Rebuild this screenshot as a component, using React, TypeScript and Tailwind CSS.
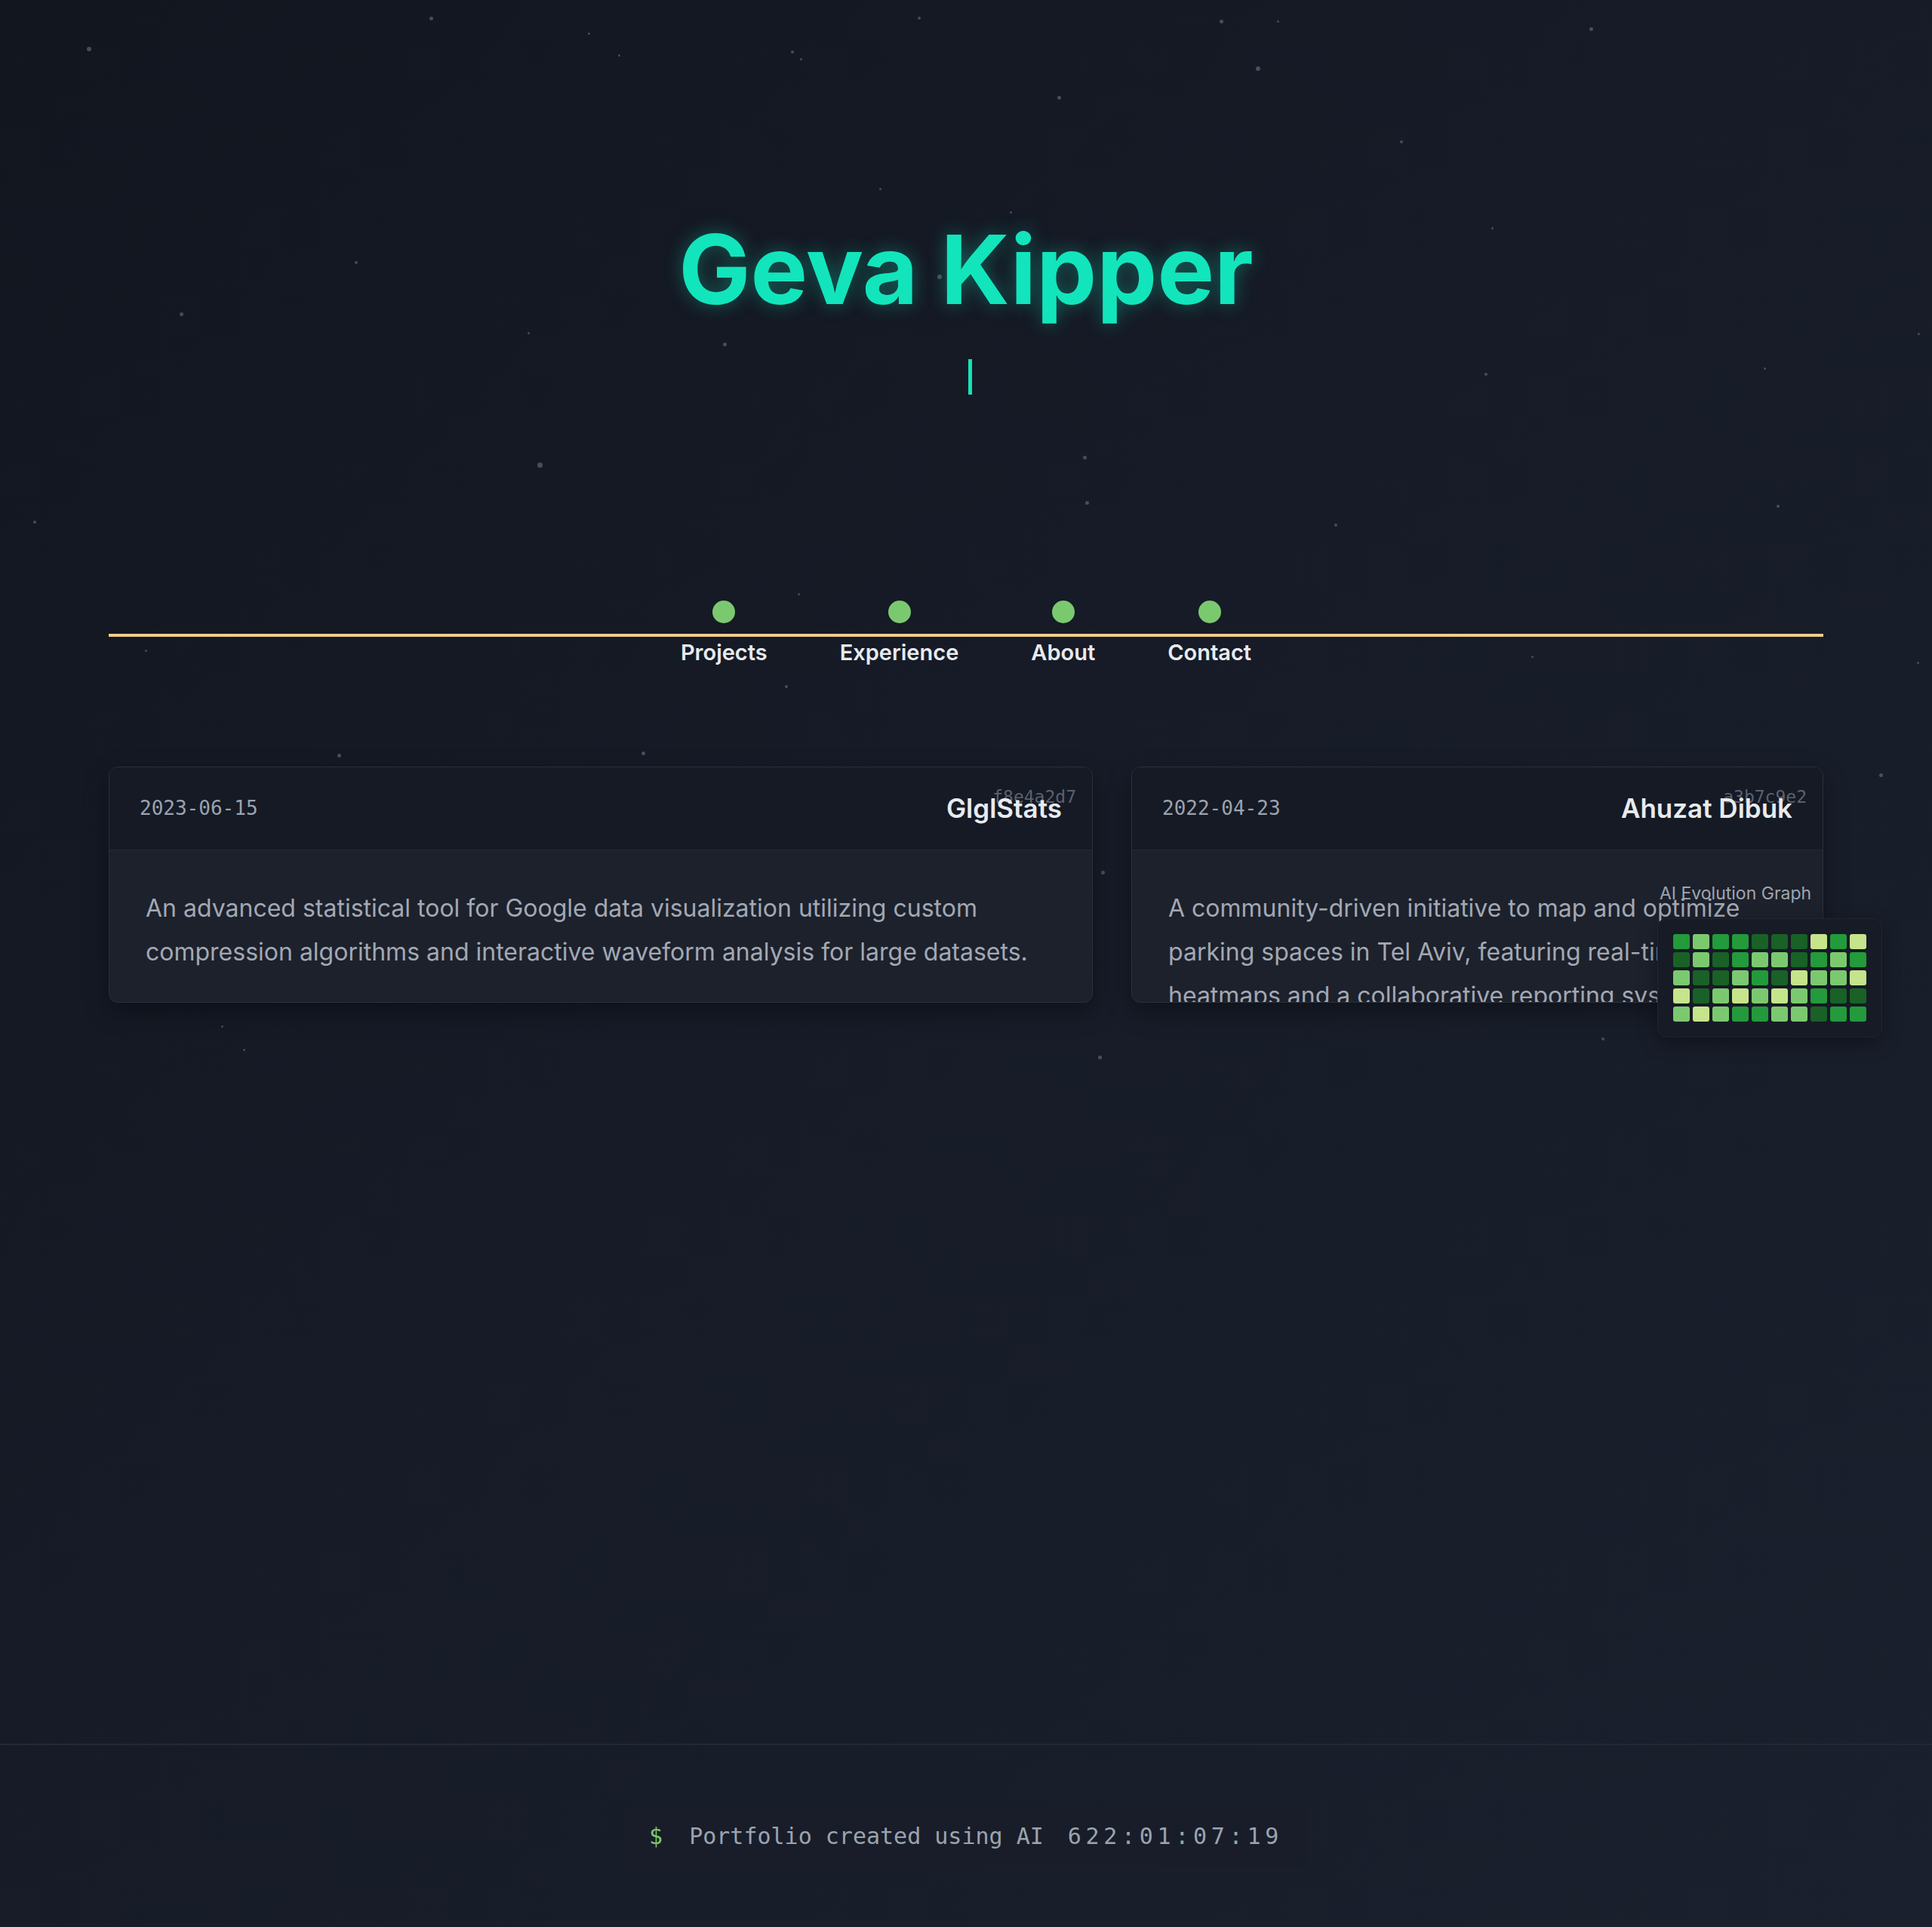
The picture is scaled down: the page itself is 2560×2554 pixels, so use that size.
import React from "react";

const STARS: [number, number, number][] = [
  [118, 65, 6], [571, 24, 5], [1050, 69, 4], [1061, 78, 3], [1218, 24, 4], [1618, 28, 5],
  [1693, 28, 3], [1667, 91, 6], [2108, 38, 5], [1403, 129, 5], [1857, 188, 4], [1166, 250, 3],
  [1977, 302, 3], [472, 348, 4], [240, 416, 5], [700, 441, 3], [960, 456, 5], [2542, 442, 3],
  [2338, 488, 3], [1969, 496, 4], [715, 616, 7], [1437, 606, 5], [1440, 666, 5], [2356, 671, 4],
  [1770, 696, 4], [46, 692, 4], [1058, 787, 3], [193, 862, 3], [2030, 870, 3], [2541, 878, 3],
  [1042, 910, 4], [449, 1001, 5], [852, 998, 5], [2492, 1027, 5], [1461, 1156, 5], [294, 1360, 3],
  [323, 1391, 3], [1457, 1401, 5], [2124, 1377, 4], [780, 44, 3], [820, 73, 3], [1245, 367, 6],
  [1339, 281, 3],
];

const D = "bg-[#196127]";
const M = "bg-[#239a3b]";
const L = "bg-[#7bc96f]";
const P = "bg-[#c6e48b]";

const GRID: string[][] = [
  [M, L, M, M, D, D, D, P, M, P],
  [D, L, D, M, L, L, D, M, L, M],
  [L, D, D, L, M, D, P, L, L, P],
  [P, D, L, P, L, P, L, M, D, D],
  [L, P, L, M, M, L, L, D, M, M],
];

const NAV = ["Projects", "Experience", "About", "Contact"];

function Card({
  date,
  title,
  hash,
  body,
}: {
  date: string;
  title: string;
  hash: string;
  body: string;
}) {
  return (
    <div className="relative h-[313px] overflow-hidden rounded-xl border border-[#2a2f3b] bg-[#1c212c] shadow-[0_12px_32px_rgba(0,0,0,0.35)]">
      <span className="absolute right-[21px] top-[28px] font-['DejaVu_Sans_Mono',monospace] text-[23px] leading-none text-[#5b616d]">
        {hash}
      </span>
      <div className="flex h-[110px] items-center justify-between border-b border-[#232835] bg-[#151a25] px-10">
        <span className="font-['DejaVu_Sans_Mono',monospace] text-[26px] text-[#9ca3af]">{date}</span>
        <span className="relative z-10 text-[35px] font-semibold text-[#e8eaee]">{title}</span>
      </div>
      <p className="px-12 pt-12 text-[32px] leading-[58px] text-[#a3a8b3]">{body}</p>
    </div>
  );
}

export default function App() {
  return (
    <div className="relative flex min-h-[2554px] flex-col overflow-hidden bg-[linear-gradient(135deg,#12161f_0%,#161b27_45%,#1b202e_100%)] font-['Inter',sans-serif]">
      {STARS.map(([x, y, s], i) => (
        <span
          key={i}
          className="absolute rounded-full bg-[#6b7080] opacity-60"
          style={{ left: x - s / 2, top: y - s / 2, width: s, height: s }}
        />
      ))}

      <main className="relative flex-1 px-[144px]">
        <section className="flex flex-col items-center pt-[294px]">
          <h1 className="text-[127px] font-bold leading-none text-[#12e5bb] [text-shadow:0_0_24px_rgba(18,229,187,0.35)]">
            Geva Kipper
          </h1>
          <div className="mt-[55px] flex justify-center">
            <span className="ml-[10px] block h-[47px] w-[5px] bg-[#19e0b5]" />
          </div>
        </section>

        <nav className="relative mt-[273px]">
          <div className="absolute left-0 right-0 top-[44px] h-1 bg-[#f1cd89]" />
          <div className="flex justify-center gap-24">
            {NAV.map((n) => (
              <div key={n} className="flex flex-col items-center">
                <span className="block h-[30px] w-[30px] rounded-full bg-[#7bc96f]" />
                <span className="mt-[24px] text-[29px] font-semibold leading-none text-[#e8eaee]">{n}</span>
              </div>
            ))}
          </div>
        </nav>

        <section className="relative mt-[137px] grid grid-cols-[1304px_917px] gap-[51px]">
          <Card
            date="2023-06-15"
            title="GlglStats"
            hash="f8e4a2d7"
            body="An advanced statistical tool for Google data visualization utilizing custom compression algorithms and interactive waveform analysis for large datasets."
          />
          <Card
            date="2022-04-23"
            title="Ahuzat Dibuk"
            hash="a3b7c9e2"
            body="A community-driven initiative to map and optimize parking spaces in Tel Aviv, featuring real-time heatmaps and a collaborative reporting system for drivers."
          />

          <div className="absolute left-[2052px] top-[157px] z-20 flex flex-col">
            <span className="pl-[3px] text-[23px] leading-none text-[#a0a5b0]">AI Evolution Graph</span>
            <div className="mt-[21px] rounded-xl border border-[#20252f] bg-[#161b25] p-5 shadow-[0_8px_24px_rgba(0,0,0,0.35)]">
              <div className="grid grid-cols-[repeat(10,22px)] gap-1">
                {GRID.flat().map((c, i) => (
                  <span key={i} className={`block h-[20px] w-[22px] rounded-[3px] ${c}`} />
                ))}
              </div>
            </div>
          </div>
        </section>
      </main>

      <footer className="relative flex h-[243px] items-center justify-center border-t-2 border-[#232835]">
        <div className="flex items-center rounded-xl bg-[#181d29] px-8 py-6 font-['DejaVu_Sans_Mono',monospace] text-[30px] leading-none">
          <span className="mr-[35px] text-[#7bc96f]">$</span>
          <span className="text-[#9ca3af]">Portfolio created using AI</span>
          <span className="ml-[32px] tracking-[0.19em] text-[#9ca3af]">622:01:07:19</span>
        </div>
      </footer>
    </div>
  );
}
